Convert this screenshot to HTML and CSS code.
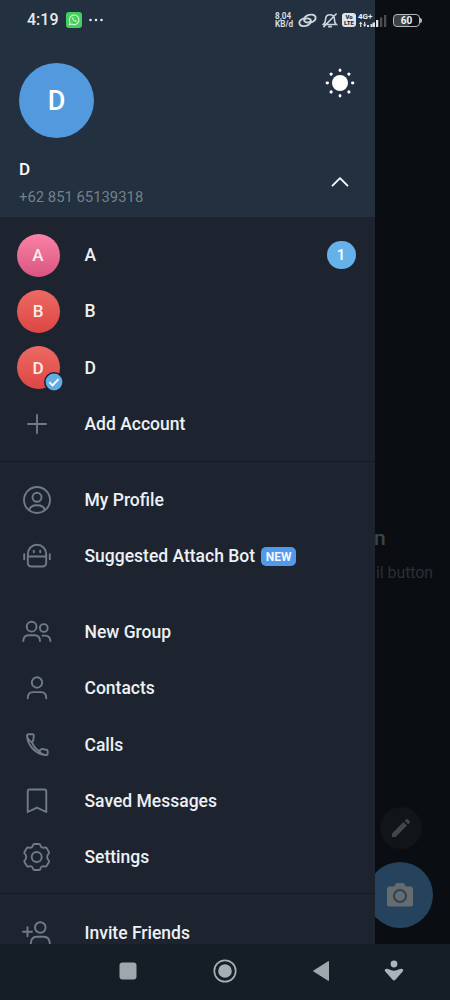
FILE: index.html
```html
<!DOCTYPE html>
<html lang="en">
<head>
<meta charset="utf-8">
<title>Menu</title>
<link rel="stylesheet" href="styles.css">
</head>
<body>
<div class="phone">
  <div class="status">
    <span class="clock">4:19</span>
    <svg class="wa" width="16" height="16" viewBox="0 0 16 16"><rect width="16" height="16" rx="3" fill="#43cf5c"/><path d="M3.300 12.700l.7-2.500a4.800 4.800 0 1 1 1.800 1.800z" fill="none" stroke="#d9f5de" stroke-width="1.100"/><path d="M6.200 5.600c-.5 2 2.200 4.700 4.100 4.200l.4-1-1.300-.7-.7.6c-.7-.3-1.200-.9-1.500-1.500l.5-.6-.5-1.200z" fill="#d9f5de"/></svg>
    <svg class="dots" width="14" height="4" viewBox="0 0 14 4" fill="#dfe6ed"><circle cx="1.500" cy="2" r="1.300"/><circle cx="7" cy="2" r="1.300"/><circle cx="12.500" cy="2" r="1.300"/></svg>
    <span class="speed">8,04<br>KB/d</span>
    <svg class="link" width="19" height="15" viewBox="0 0 19 15" fill="none" stroke="#ccd4dc" stroke-width="1.800" stroke-linecap="round"><path d="M12.500 8.500C10.500 10.300 5.500 9.600 6.100 6.200 6.700 3.100 10.500 1.300 14 1.600c4.600.4 4.800 5.200.8 7.200-1 .5-2 .8-3 .9"/><path d="M6.500 6.300c2-1.700 7-1 6.400 2.300-.6 3.100-4.400 4.800-7.900 4.500C.4 12.700.2 8 4.200 6c.7-.4 1.400-.6 2.100-.7"/></svg>
    <svg class="bell" width="16" height="17" viewBox="0 0 17 17" fill="none" stroke="#ccd4dc" stroke-width="1.700"><path d="M1.500 12.700h13.500c-1.700-1.500-1.800-3-1.800-5.500C13.200 4 11.500 2.400 8.500 2.400S3.800 4 3.800 7.200c0 2.500-.6 4-2.300 5.500zM6.500 15h4M15.500 1L1.500 15.500"/></svg>
    <span class="volte">Vo<br>LTE</span>
    <span class="net"><span class="net-type">4G+</span><svg width="29" height="15" viewBox="0 0 29 15"><g fill="#dce2e8"><path d="M1 11l1.700-2.500L4.400 11H3.300v3H2.100v-3zM5 11.500h3.400L6.700 14zM6.100 9h1.200v3H6.100zM9 12h2v2H9zM12.500 11h2v3h-2z"/><path d="M14.500 9.500H17V14h-2.500z"/></g><path d="M18 7h2.300v7H18z" fill="#dce2e8"/><path d="M22 4.500h2.300V14H22zM26 2h2.300v12H26z" fill="#4a4e52"/></svg></span>
    <span class="battery">60</span><i class="cap"></i>
  </div>

  <main class="stage">
    <aside class="drawer">
      <header class="head">
        <div class="head-row">
          <div class="avatar big">D</div>
          <svg class="sun" width="30" height="30" viewBox="0 0 30 30" fill="#fff"><circle cx="15" cy="15" r="8"/><g><ellipse cx="15" cy="2.300" rx="1.400" ry="1.700"/><ellipse cx="15" cy="27.700" rx="1.400" ry="1.700"/><ellipse cx="2.300" cy="15" rx="1.700" ry="1.400"/><ellipse cx="27.700" cy="15" rx="1.700" ry="1.400"/><circle cx="6.100" cy="6.100" r="1.600"/><circle cx="23.900" cy="6.100" r="1.600"/><circle cx="6.100" cy="23.900" r="1.600"/><circle cx="23.900" cy="23.900" r="1.600"/></g></svg>
        </div>
        <div class="who">
          <div><div class="name">D</div><div class="tel">+62 851 65139318</div></div>
          <svg class="chev" width="20" height="12" viewBox="0 0 20 12" fill="none" stroke="#f3f7fa" stroke-width="1.900" stroke-linecap="round" stroke-linejoin="round"><path d="M2.500 9.700L10 2.200l7.500 7.500"/></svg>
        </div>
      </header>

      <section class="group accounts">
        <div class="row"><div class="avatar pink">A</div><span>A</span><b class="count">1</b></div>
        <div class="row"><div class="avatar red">B</div><span>B</span></div>
        <div class="row"><div class="avatar red">D<svg class="tick" width="20" height="20" viewBox="0 0 20 20"><circle cx="10" cy="10" r="10" fill="#1d242f"/><circle cx="10" cy="10" r="8.400" fill="#60aee8"/><path d="M5.300 10.200l3.200 3.200 6-6.300" fill="none" stroke="#fff" stroke-width="1.900"/></svg></div><span>D</span></div>
        <div class="row"><svg class="ico" viewBox="0 0 30 30"><path d="M15 6v18M6 15h18"/></svg><span>Add Account</span></div>
      </section>

      <section class="group profile">
        <div class="row"><svg class="ico" viewBox="0 0 30 30"><circle cx="15" cy="15" r="13"/><circle cx="15" cy="12.300" r="4.500"/><path d="M7.500 25c.4-3.300 2.800-4.700 7.500-4.700s7.100 1.400 7.500 4.700"/></svg><span>My Profile</span></div>
        <div class="row"><svg class="ico" viewBox="0 0 30 30"><path d="M5.800 14.800V13a9.200 9.200 0 0 1 18.400 0v9a3.500 3.500 0 0 1-3.500 3.500H9.300A3.500 3.500 0 0 1 5.800 22zM5.800 15.500h18.400M2.200 13.200v5M27.800 13.200v5"/><path d="M11.800 9.800v1.400M18.200 9.800v1.400"/></svg><span>Suggested Attach Bot</span><b class="new">NEW</b></div>
      </section>

      <section class="group main">
        <div class="row"><svg class="ico" viewBox="0 0 30 30"><circle cx="9.600" cy="9.700" r="4.900"/><circle cx="21.800" cy="11" r="3.900"/><path d="M1.300 24c.2-4.200 2.200-5.700 5.200-5.700h6.300c3 0 5 1.500 5.200 5.700M20.500 18.600h2.700c3 0 4.800 1.500 5.200 5.400"/></svg><span>New Group</span></div>
        <div class="row"><svg class="ico" viewBox="0 0 30 30"><circle cx="15" cy="9.500" r="5.200"/><path d="M5.700 25.300c0-4.300 1.900-6.200 5.300-6.200h8c3.400 0 5.300 1.900 5.300 6.200"/></svg><span>Contacts</span></div>
        <div class="row"><svg class="ico" viewBox="0 0 30 30"><path d="M6.300 4.200h4.200c.9 0 1.400.5 1.300 1.400l-.5 4.200c-.1.900-.6 1.600-1.500 2.400M6.300 4.200c-1 0-1.400.7-1.300 1.700.8 10.200 8.900 18.300 19 19.100 1 .1 1.700-.5 1.700-1.500v-2.200c0-.9-.5-1.400-1.400-1.600l-3.200-.6c-.9-.1-1.600 0-2.200.5l-1.900 1.400M5.300 7.500c.9 2 2.200 3.900 4.500 4.700 1.600 3.600 3.800 6.900 7.200 8.800 1.400 2 3.500 3.200 5.500 3.700"/></svg><span>Calls</span></div>
        <div class="row"><svg class="ico" viewBox="0 0 30 30"><path d="M5.700 26V5.500C5.700 4.200 6.300 3.500 7.600 3.500h14.800c1.300 0 1.900.7 1.900 2V26L15 21.700z"/></svg><span>Saved Messages</span></div>
        <div class="row"><svg class="ico" viewBox="0 0 30 30"><circle cx="14.700" cy="15" r="5"/><path d="M12.500 2h4.400c.9 0 1.300.5 1.600 1.500.5 1.900 2 2.700 3.900 2.100 1.200-.4 1.800-.2 2.300.6l2.200 3.700c.5.900.3 1.500-.6 2.200-1.500 1.400-1.500 4.300 0 5.800.9.700 1.100 1.300.6 2.200l-2.200 3.700c-.5.800-1.100 1-2.300.6-1.900-.6-3.400.2-3.900 2.100-.3 1-.7 1.500-1.600 1.500h-4.400c-.9 0-1.300-.5-1.600-1.500-.5-1.900-2-2.700-3.900-2.100-1.200.4-1.800.2-2.300-.6l-2.200-3.700c-.5-.9-.3-1.500.6-2.200 1.500-1.500 1.500-4.400 0-5.800-.9-.7-1.100-1.300-.6-2.200l2.200-3.700c.5-.8 1.100-1 2.300-.6 1.900.6 3.400-.2 3.900-2.100.3-1 .7-1.500 1.600-1.500z"/></svg><span>Settings</span></div>
      </section>

      <section class="group invite">
        <div class="row"><svg class="ico" viewBox="0 0 30 30"><circle cx="18.300" cy="9.500" r="5.300"/><path d="M8.700 26c.2-4.800 2.200-7.300 6-7.300h7.200c3.800 0 5.800 2.500 6 7.300M5.500 9.300v9M1 13.800h9"/></svg><span>Invite Friends</span></div>
      </section>
    </aside>

    <div class="behind">
      <div class="empty-title">n</div>
      <div class="empty-sub">il button</div>
      <div class="fab small"><svg width="22" height="22" viewBox="0 0 22 22" fill="#43474b"><path d="M2 20v-3.500L13.500 5l3.500 3.500L5.500 20zM14.700 3.800l1.500-1.500c.5-.5 1-.5 1.500 0l2 2c.5.500.5 1 0 1.500l-1.500 1.500z"/></svg></div>
      <div class="fab large"><svg width="28" height="26" viewBox="0 0 28 26"><path d="M3.500 4.500H8L10.500 1h7L20 4.500h4.500c1.700 0 2.500.9 2.500 2.500v15c0 1.700-.8 2.500-2.500 2.500h-21C1.800 24.500 1 23.700 1 22V7c0-1.600.8-2.500 2.500-2.500z" fill="#686b6d"/><circle cx="14" cy="14" r="6" fill="none" stroke="#25435d" stroke-width="2"/></svg></div>
    </div>
  </main>

  <nav class="nav">
    <svg width="18" height="18" viewBox="0 0 18 18"><rect x=".5" y=".5" width="17" height="17" rx="3" fill="#9fa6ae"/></svg>
    <svg width="24" height="24" viewBox="0 0 24 24"><circle cx="12" cy="12" r="10.700" fill="none" stroke="#a6afb3" stroke-width="1.700"/><circle cx="12" cy="12" r="6.800" fill="#a6afb3"/></svg>
    <svg width="18" height="22" viewBox="0 0 18 22"><path d="M16.500 1.500v19L1.500 11z" fill="#9da7ae" stroke="#9da7ae" stroke-linejoin="round"/></svg>
    <svg width="20" height="22" viewBox="0 0 20 22" fill="#a9b4bd"><circle cx="10" cy="4" r="3.400"/><path d="M1.700 9c1.300-.4 2.300-.2 3.200.3C8 11.200 12 11.200 15.100 9.300c.9-.5 1.900-.7 3.200-.3 1.300.4 1.200 1.700.4 2.600l-7.300 8.200c-.9 1-1.900 1-2.800 0l-7.300-8.200c-.8-.9-.9-2.200.4-2.600z"/></svg>
  </nav>
</div>
</body>
</html>
```
FILE: styles.css
```css
* { box-sizing: border-box; }
body {
  margin: 0;
  background: #0b0f14;
  color: #edf1f5;
  font-family: Roboto, "Liberation Sans", sans-serif;
}
.phone {
  width: 450px;
  height: 1000px;
  display: grid;
  grid-template-rows: 40px 904px 56px;
  overflow: hidden;
}
.status {
  display: flex;
  align-items: center;
  padding-left: 27px;
  background: linear-gradient(90deg, #23303f 375px, #0b0f14 375px);
}
.status > * { flex-shrink: 0; }
.clock { width: 39px; font-size: 16px; font-weight: 500; line-height: 20px; color: #e5ebf1; }
.dots { margin-left: 7px; }
.speed { margin-left: 172px; width: 22px; font-size: 8.2px; line-height: 8px; font-weight: 700; color: #d4dbe2; }
.link { margin-left: 1px; }
.bell { margin-left: 5px; }
.volte {
  margin-left: 4px;
  width: 14px;
  height: 14px;
  padding-top: 1px;
  border-radius: 3px;
  background: #dfe4e9;
  color: #23303f;
  font-size: 6px;
  line-height: 6px;
  font-weight: 900;
  text-align: center;
}
.net { display: grid; margin-left: 2px; }
.net > * { grid-area: 1 / 1; }
.net-type { font-size: 8px; line-height: 8px; font-weight: 700; }
.battery {
  margin-left: 6px;
  width: 27px;
  height: 13px;
  border: 1.5px solid #b4b8bc;
  border-radius: 4px;
  background: linear-gradient(90deg, #3d4144 60%, transparent 60%);
  font-size: 10px;
  line-height: 11px;
  font-weight: 700;
  text-align: center;
}
.cap { width: 2px; height: 5px; border-radius: 0 2px 2px 0; background: #b4b8bc; }

.stage { display: grid; grid-template-columns: 375px 75px; min-height: 0; }
.drawer { background: #1d242f; overflow: hidden; }
.head { height: 178px; padding: 23px 20px 0 19px; background: #23303f; border-bottom: 1px solid #1b2531; }
.head-row { display: flex; justify-content: space-between; align-items: flex-start; }
.avatar {
  position: relative;
  display: grid;
  place-items: center;
  width: 43px;
  height: 43px;
  margin-left: 16.5px;
  border-radius: 50%;
  color: #fbeeea;
  font-size: 17px;
  font-weight: 500;
}
.avatar.big { width: 75px; height: 75px; margin: 0; background: #529add; color: #fff; font-size: 27px; }
.pink { background: linear-gradient(#fa83a6, #d95580); }
.red { background: linear-gradient(#ec6a64, #dd4644); }
.tick { position: absolute; right: -4.5px; bottom: -2.5px; }
.sun { margin-top: 5px; }
.who { display: flex; justify-content: space-between; align-items: flex-start; padding-top: 20px; }
.name { font-size: 17px; line-height: 22px; font-weight: 500; color: #fff; }
.tel { margin-top: 7px; font-size: 14.85px; line-height: 20px; color: #74808c; }
.chev { margin: 18px 5px 0 0; }

.accounts { height: 244px; padding-top: 9px; border-bottom: 1px solid #141b23; }
.profile { padding-top: 10px; height: 142px; }
.main { height: 290px; border-bottom: 1px solid #141b23; }
.invite { padding-top: 11px; }
.row {
  display: grid;
  grid-template-columns: 84.5px auto auto 1fr;
  align-items: center;
  height: 56.25px;
  font-size: 17.5px;
  font-weight: 500;
  white-space: nowrap;
}
.ico {
  width: 30px;
  height: 30px;
  margin-left: 21.5px;
  fill: none;
  stroke: #717b85;
  stroke-width: 1.900;
  stroke-linecap: round;
  stroke-linejoin: round;
}
.count {
  grid-column: 4;
  justify-self: end;
  margin-right: 19.5px;
  width: 29px;
  height: 28px;
  border-radius: 14px;
  background: #65b1ea;
  color: #fff;
  font-size: 15px;
  line-height: 28px;
  font-weight: 500;
  text-align: center;
}
.new {
  margin-left: 6px;
  width: 35px;
  height: 19px;
  border-radius: 5px;
  background: #5299ec;
  color: #f2f7ff;
  font-size: 12px;
  line-height: 20px;
  font-weight: 700;
  text-align: center;
}
.behind { background: #0a0e12; overflow: hidden; padding-top: 485px; }
.empty-title { margin-left: -1px; font-size: 21px; line-height: 26px; font-weight: 500; color: #3f4347; }
.empty-sub { margin: 11px 0 0 1px; font-size: 15.8px; line-height: 22px; color: #2c3034; white-space: nowrap; }
.fab { display: grid; place-items: center; border-radius: 50%; }
.fab.small { width: 42px; height: 42px; margin: 223px 0 0 5px; background: #11151a; }
.fab.large { width: 66px; height: 66px; margin: 13px 0 0 -8px; background: #25435d; }
.nav { display: flex; align-items: center; padding: 0 0 3px 119px; background: #151e26; }
.nav svg:nth-child(2) { margin-left: 76px; }
.nav svg:nth-child(3) { margin-left: 75px; }
.nav svg:nth-child(4) { margin-left: 54px; }
```
